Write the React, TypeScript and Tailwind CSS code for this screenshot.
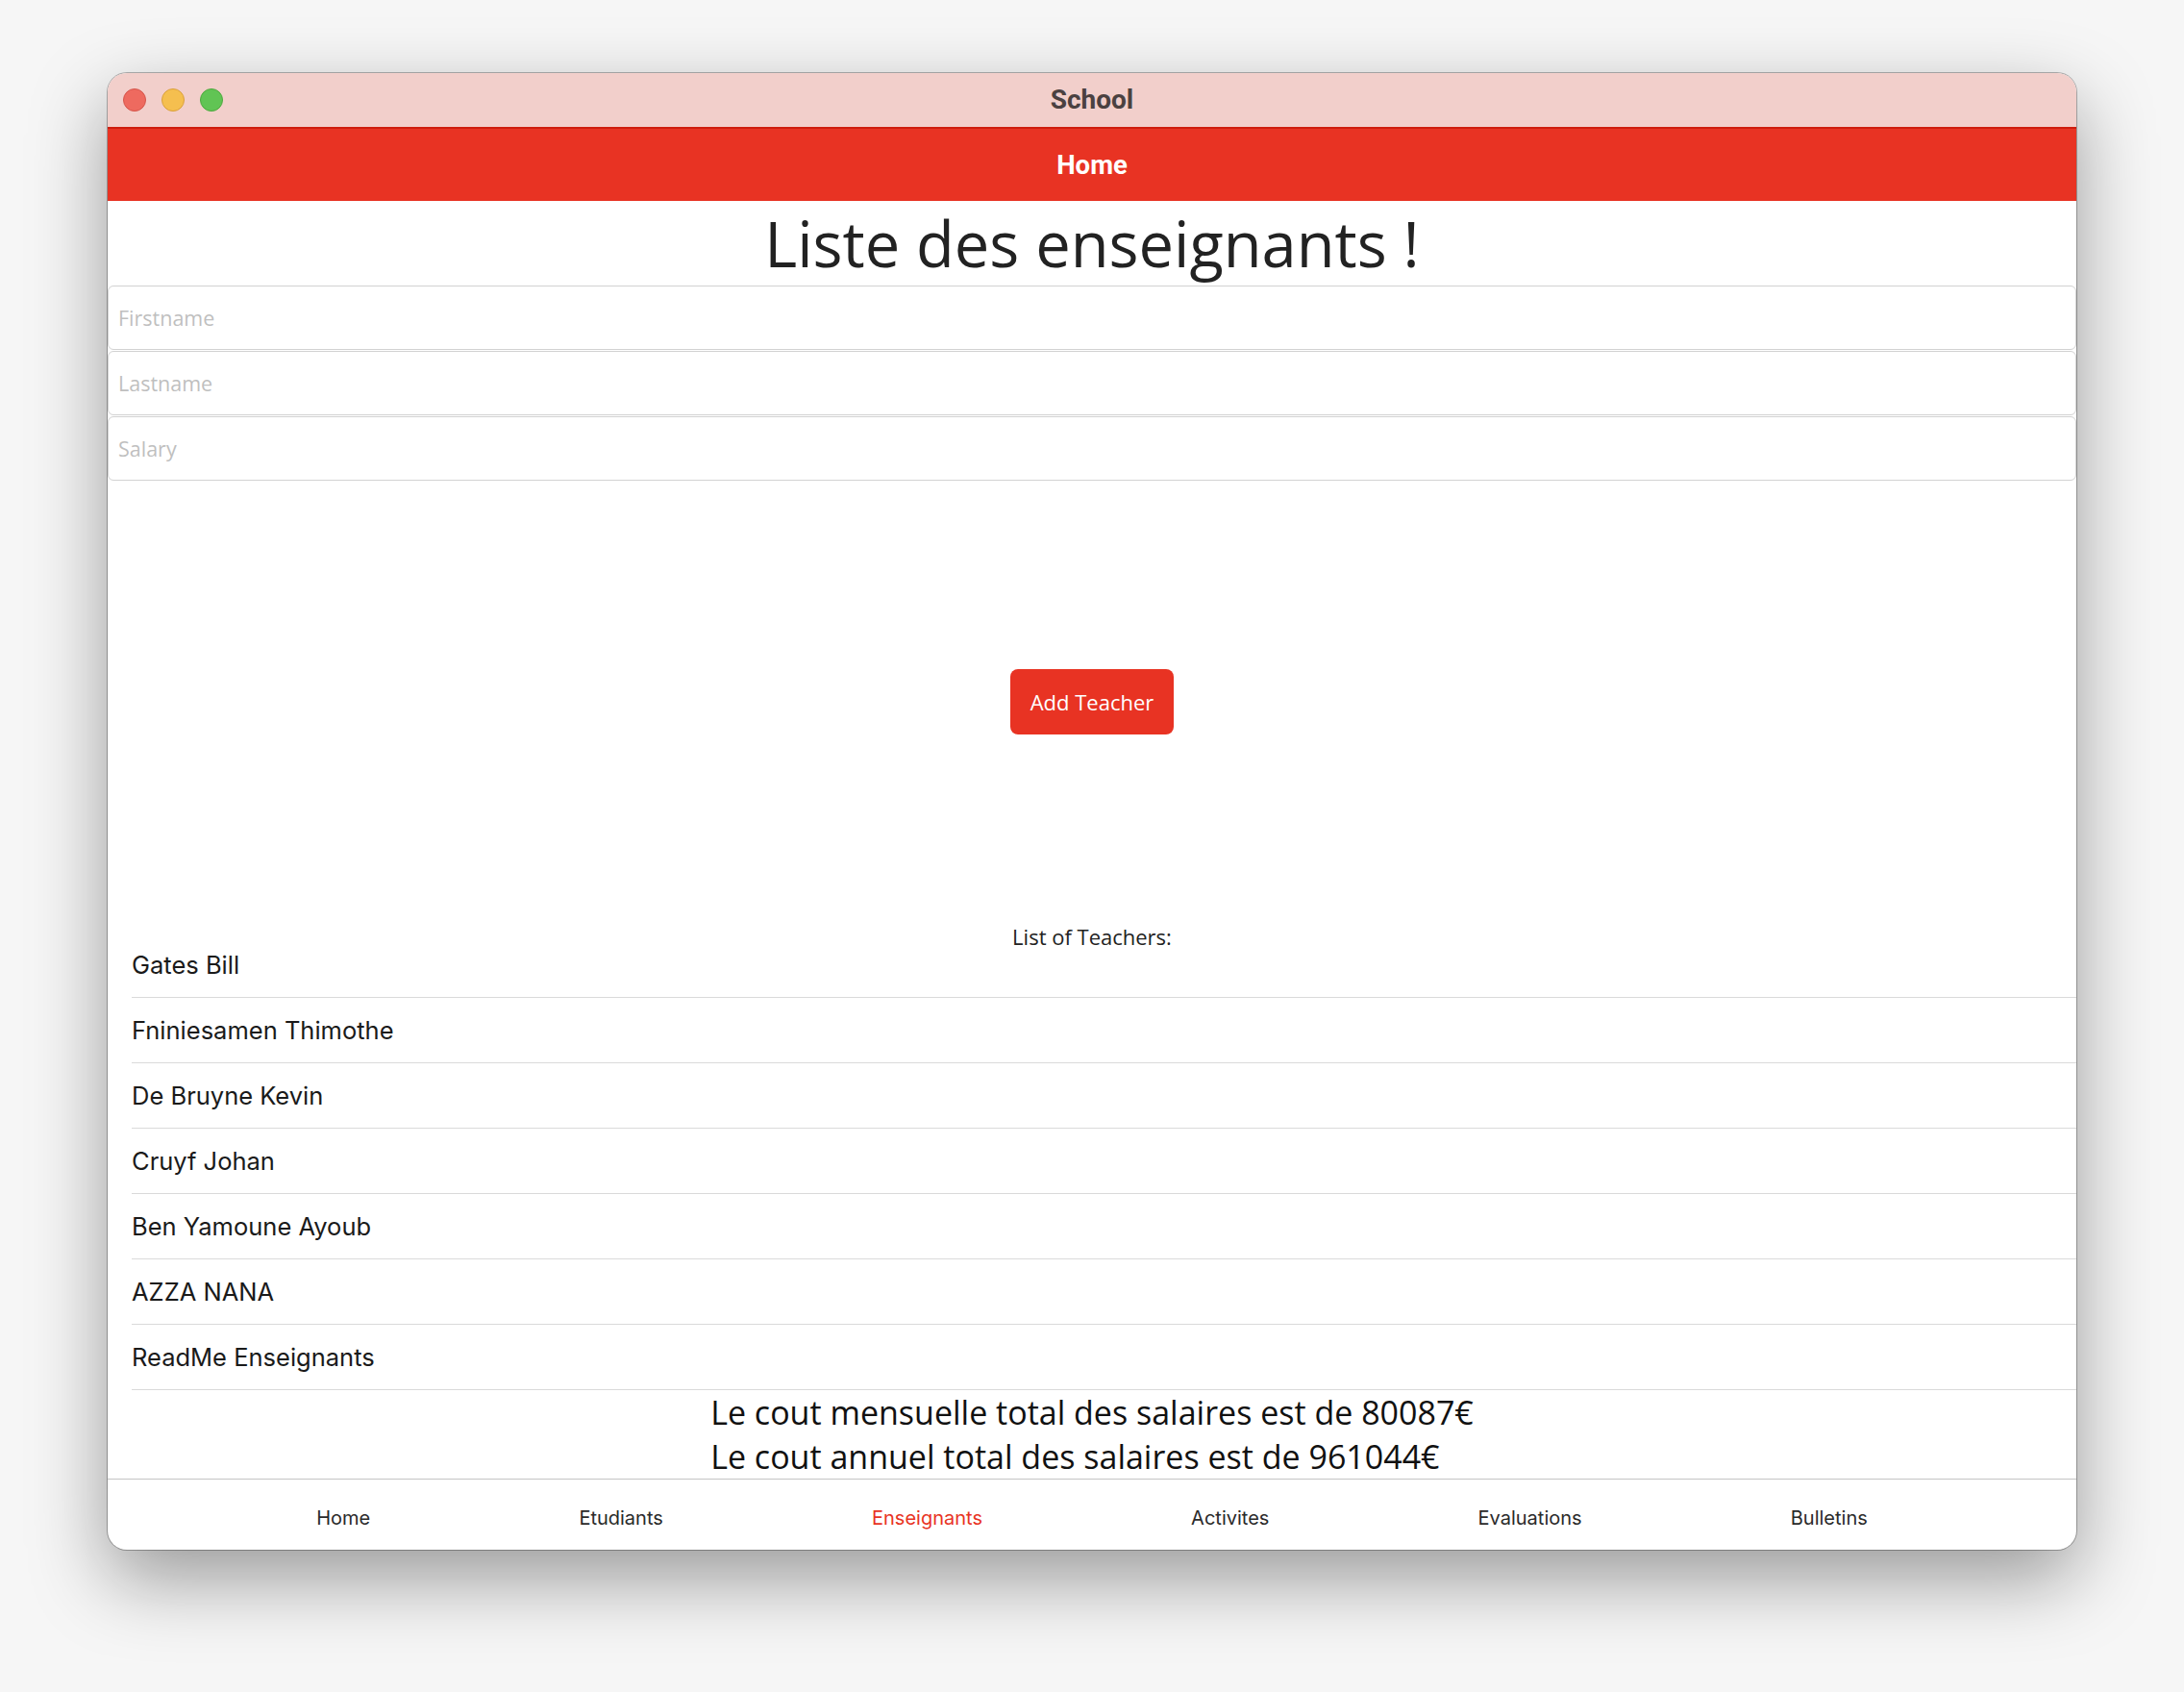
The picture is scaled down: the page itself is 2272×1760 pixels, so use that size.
import React from "react";

const teachers = [
  "Gates Bill",
  "Fniniesamen Thimothe",
  "De Bruyne Kevin",
  "Cruyf Johan",
  "Ben Yamoune Ayoub",
  "AZZA NANA",
  "ReadMe Enseignants",
];

const tabs = ["Home", "Etudiants", "Enseignants", "Activites", "Evaluations", "Bulletins"];

export default function App() {
  return (
    <div className="min-h-[1760px] w-[2272px] bg-[#f6f6f6] pl-[112px] pt-[76px]">
      <div className="flex h-[1536px] w-[2048px] flex-col overflow-hidden rounded-[20px] bg-white shadow-[0_0_0_1px_rgba(0,0,0,0.28),0_30px_80px_rgba(0,0,0,0.38)]">
        {/* Title bar */}
        <div className="relative flex h-[56px] shrink-0 items-center justify-center bg-[#f2cfcb]">
          <div className="absolute left-[16px] top-[16px] flex gap-[16px]">
            <span className="h-[24px] w-[24px] rounded-full border border-[#d4554b] bg-[#ee6a5f]" />
            <span className="h-[24px] w-[24px] rounded-full border border-[#d9a03c] bg-[#f5bf4f]" />
            <span className="h-[24px] w-[24px] rounded-full border border-[#4ea83f] bg-[#61c454]" />
          </div>
          <span className="font-['Roboto',sans-serif] text-[28px] font-bold text-[#4b4141]">School</span>
        </div>
        {/* Header */}
        <div className="flex h-[77px] shrink-0 items-center justify-center border-t-2 border-[#cf1d0e] bg-[#e83323]">
          <span className="font-['Roboto',sans-serif] text-[27.5px] font-bold text-white">Home</span>
        </div>
        {/* Content */}
        <div className="flex flex-1 flex-col font-['Open_Sans',sans-serif]">
          <h1 className="h-[88px] text-center text-[65px] leading-[88px] text-[#222]">Liste des enseignants !</h1>
          <div className="flex flex-col">
            {["Firstname", "Lastname", "Salary"].map((p) => (
              <input
                key={p}
                placeholder={p}
                className="mb-[1px] h-[67px] w-full rounded-[6px] border border-[#d2d2d2] bg-white px-[10px] text-[21.5px] text-[#222] outline-none placeholder:text-[#bfbfbf]"
              />
            ))}
          </div>
          <div className="flex h-[458px] items-center justify-center">
            <button className="h-[68px] w-[170px] rounded-[8px] bg-[#e83323] text-[22px] text-white">Add Teacher</button>
          </div>
          <div className="relative z-10 -mb-[19px] h-[30px] text-center text-[22px] leading-[30px] text-[#222]">List of Teachers:</div>
          <ul className="flex flex-col pl-[25px] font-['Inter',sans-serif]">
            {teachers.map((t) => (
              <li key={t} className="flex h-[68px] items-center border-b border-[#dadada] pt-[2px] text-[25.5px] text-[#1a1a1a]">
                {t}
              </li>
            ))}
          </ul>
          <div className="flex h-[92px] justify-center">
            <div className="text-left text-[34px] leading-[46px] text-[#111]">
              <div>Le cout mensuelle total des salaires est de 80087€</div>
              <div>Le cout annuel total des salaires est de 961044€</div>
            </div>
          </div>
        </div>
        {/* Footer */}
        <div className="flex h-[76px] shrink-0 items-center justify-evenly border-t border-[#c4c4c4] pt-[4px] font-['Inter',sans-serif] text-[20px]">
          {tabs.map((t) => (
            <span key={t} className={t === "Enseignants" ? "text-[#e83323]" : "text-[#2a2a2a]"}>
              {t}
            </span>
          ))}
        </div>
      </div>
    </div>
  );
}
